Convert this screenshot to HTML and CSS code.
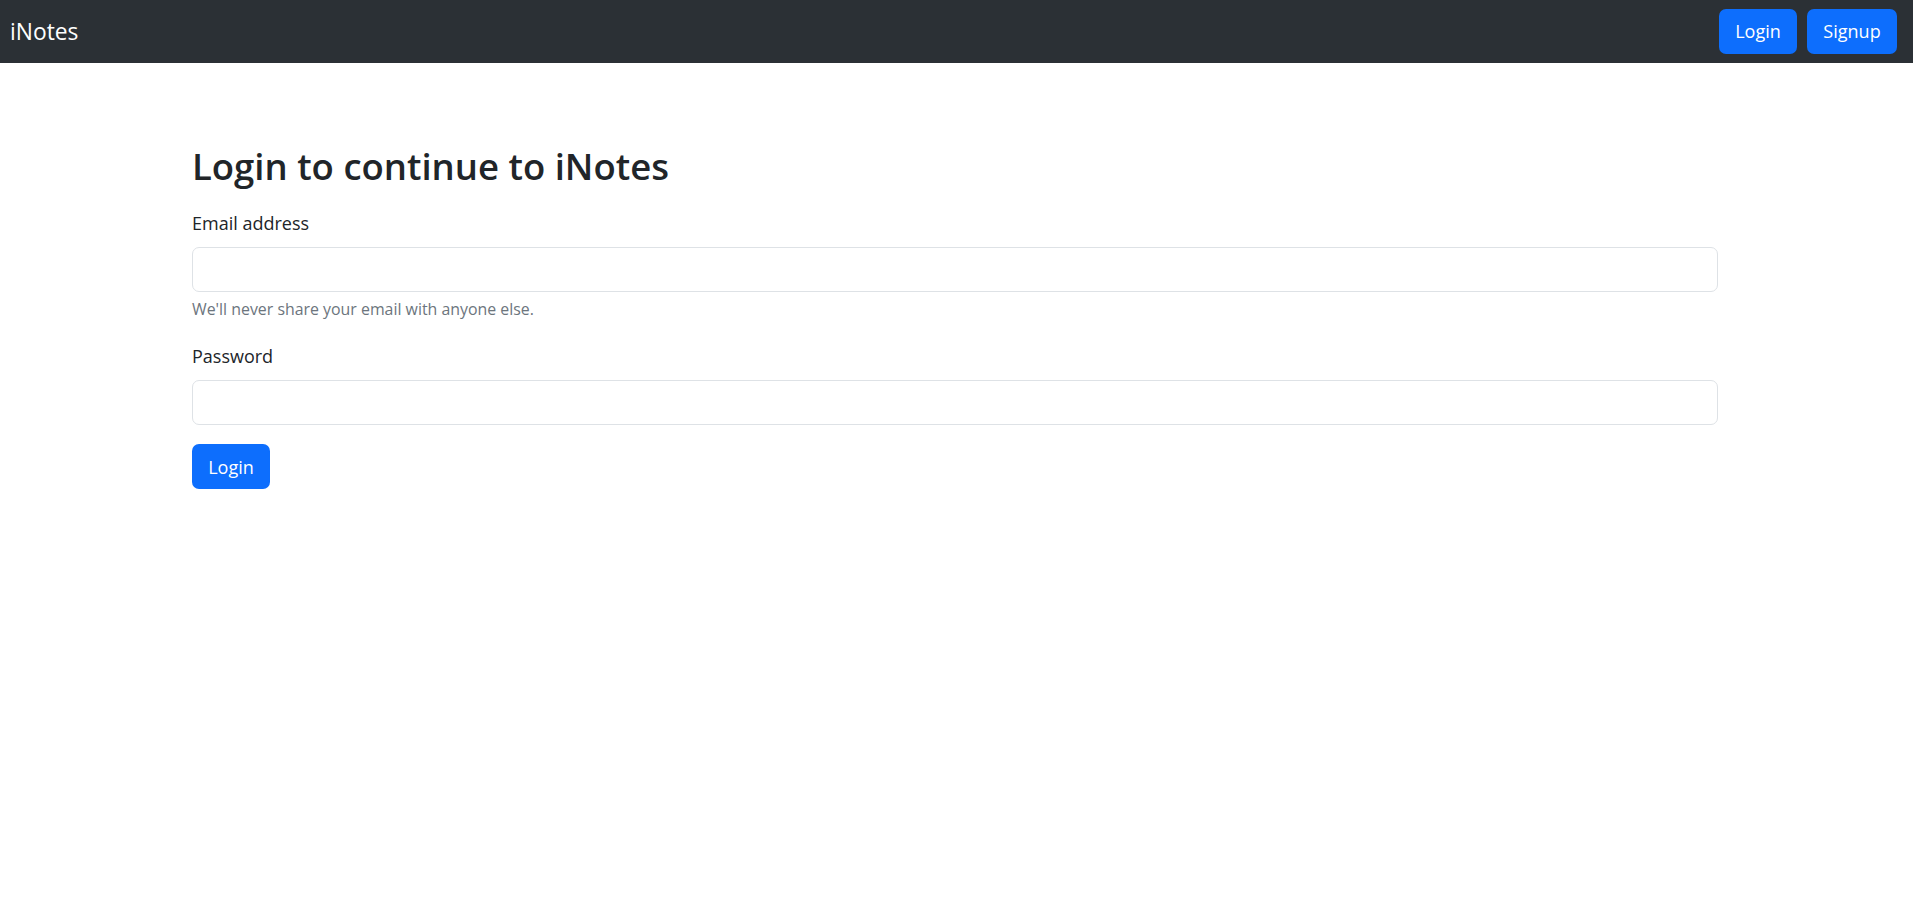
FILE: index.html
```html
<!DOCTYPE html>
<html lang="en">
<head>
<meta charset="utf-8">
<title>iNotes</title>
<link rel="stylesheet" href="styles.css">
</head>
<body>
<nav class="navbar">
  <a class="brand" href="#">iNotes</a>
  <div class="nav-actions">
    <a class="btn btn-login" href="#">Login</a>
    <a class="btn btn-signup" href="#">Signup</a>
  </div>
</nav>
<main class="container">
  <h2 class="title">Login to continue to iNotes</h2>
  <form class="form">
    <div class="field">
      <label class="label" for="email">Email address</label>
      <input class="input" type="email" id="email">
      <div class="help">We'll never share your email with anyone else.</div>
    </div>
    <div class="field">
      <label class="label" for="password">Password</label>
      <input class="input" type="password" id="password">
    </div>
    <button class="btn btn-login" type="submit">Login</button>
  </form>
</main>
</body>
</html>
```
FILE: styles.css
```css
* { box-sizing: border-box; }
body {
  margin: 0;
  font-family: "Open Sans", "Noto Sans", sans-serif;
  font-size: 18px;
  line-height: 28.8px;
  color: #212529;
  background: #fff;
}
.navbar {
  height: 63px;
  background: #2b3035;
  display: flex;
  align-items: center;
  justify-content: space-between;
  padding: 0 16px 0 10px;
}
.brand {
  color: #fff;
  text-decoration: none;
  font-size: 22.8px;
  line-height: 1.2;
}
.nav-actions {
  display: flex;
  gap: 10px;
}
.btn {
  display: inline-flex;
  align-items: center;
  justify-content: center;
  height: 45px;
  padding: 0;
  border: none;
  border-radius: 7px;
  background: #0d6efd;
  color: #fff;
  font-family: inherit;
  font-size: 18px;
  text-decoration: none;
  cursor: pointer;
}
.btn-login { width: 78px; }
.btn-signup { width: 90px; }
.container {
  padding: 0 195px 0 192px;
}
.title {
  margin: 80px 0 20px;
  font-size: 36.5px;
  font-weight: 600;
  line-height: 46px;
}
.field {
  margin-bottom: 19.2px;
}
.label {
  display: block;
  margin-bottom: 9.6px;
}
.input {
  display: block;
  width: 100%;
  height: 45px;
  border: 1px solid #dee2e6;
  border-radius: 7px;
  font-family: inherit;
  font-size: 18px;
  padding: 0 14px;
}
.help {
  margin-top: 4.8px;
  font-size: 15.9px;
  line-height: 25.2px;
  color: #6c757d;
}
```
